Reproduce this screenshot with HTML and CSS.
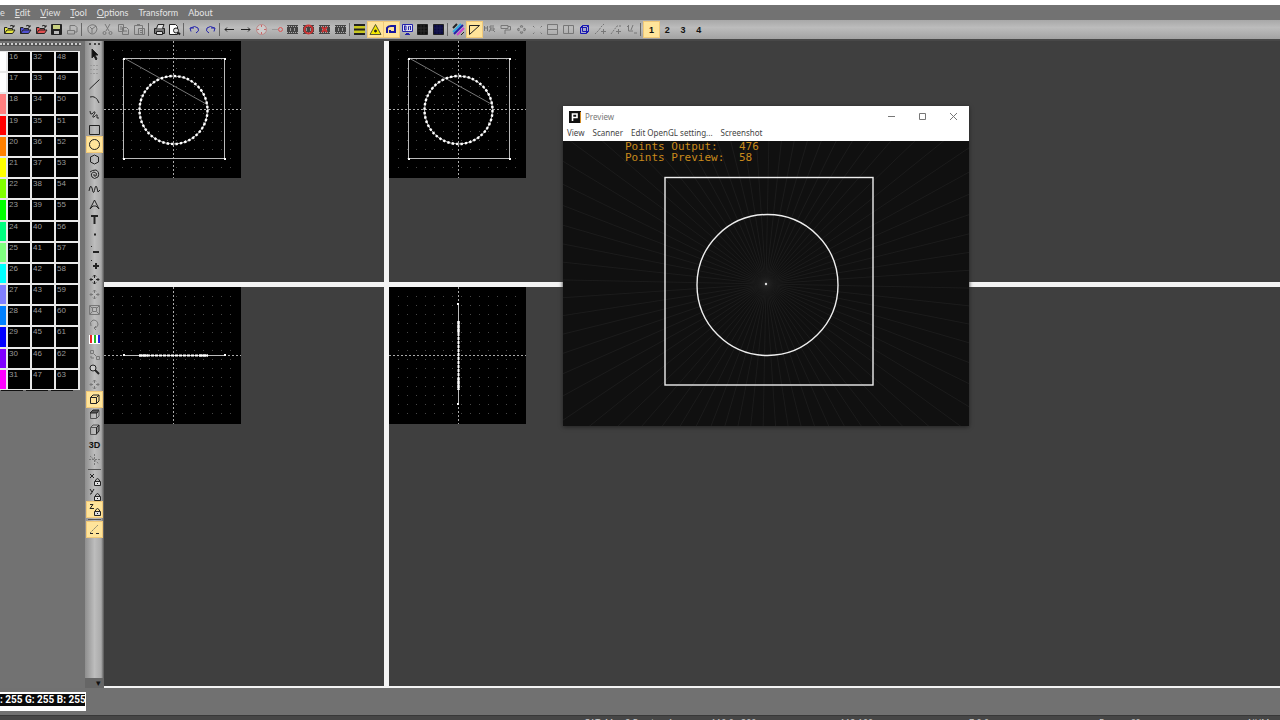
FILE: index.html
```
<!DOCTYPE html>
<html lang="en">
<head>
    <meta charset="UTF-8">
    <meta name="viewport" content="width=device-width, initial-scale=1.0">
    <title>Laser Editor</title>
    <link rel="stylesheet" href="styles.css">
</head>
<body>
    <header class="titlebar"></header>
    <nav class="menubar">
        <button>e</button>
        <button><u>E</u>dit</button>
        <button><u>V</u>iew</button>
        <button><u>T</u>ool</button>
        <button><u>O</u>ptions</button>
        <button>Transform</button>
        <button>About</button>
    </nav>
    <div class="toolbar">
        <div class="toolbar-items" id="toolbar"></div>
    </div>

    <main class="main">
        <aside class="dock">
            <div class="dock-grip"></div>
            <div class="palette" id="palette"></div>
            <div class="palette-end"><i></i><i></i><i></i></div>
        </aside>

        <div class="tools">
            <div class="tools-grip"></div>
            <div class="tools-items" id="tools"></div>
            <div class="tools-end">&#9662;</div>
        </div>

        <section class="views">
            <div class="view">
                <svg class="frame" viewBox="0 0 137 137">
                    <defs>
                        <pattern id="dots" x="5" y="5" width="9" height="9" patternUnits="userSpaceOnUse">
                            <rect x="4" y="4" width="1" height="1" fill="#484848"/>
                        </pattern>
                        <g id="grid">
                            <rect width="137" height="137" fill="#000"/>
                            <rect x="5" y="5" width="127" height="127" fill="url(#dots)"/>
                            <path class="axis" d="M0 68.5H137M69.5 0V137"/>
                        </g>
                        <g id="shape">
                            <path class="jump" d="M20 17L104 64"/>
                            <rect class="line" x="19.5" y="17.5" width="101" height="100"/>
                            <circle class="line" cx="69.5" cy="69" r="34"/>
                            <circle class="points" cx="69.5" cy="69" r="34"/>
                            <path class="corner" d="M19 17h2v2h-2zM120 17h2v2h-2zM19 117h2v2h-2zM120 117h2v2h-2z"/>
                        </g>
                    </defs>
                    <use href="#grid"/>
                    <use href="#shape"/>
                </svg>
            </div>
            <div class="view">
                <svg class="frame" viewBox="0 0 137 137">
                    <use href="#grid"/>
                    <use href="#shape"/>
                </svg>
            </div>
            <div class="view">
                <svg class="frame" viewBox="0 0 137 137">
                    <use href="#grid"/>
                    <path class="line" d="M20 68.5H121"/>
                    <path class="edge" d="M35 68.5H104"/>
                    <path class="edge-solid" d="M35 68.5H44M95 68.5H104"/>
                    <path class="corner" d="M19 67h2v2h-2zM120 67h2v2h-2z"/>
                </svg>
            </div>
            <div class="view">
                <svg class="frame" viewBox="0 0 137 137">
                    <use href="#grid"/>
                    <path class="line" d="M69.5 17V117"/>
                    <path class="edge" d="M69.5 34V103"/>
                    <path class="edge-solid" d="M69.5 34V46M69.5 91V103"/>
                    <path class="corner" d="M68 16h2v2h-2zM68 116h2v2h-2z"/>
                </svg>
            </div>
        </section>

        <section class="preview">
            <div class="preview-title">
                <svg class="logo" viewBox="0 0 12 12">
                    <rect width="12" height="12" fill="#111"/>
                    <path d="M11.5 1V12" stroke="#d08a20"/>
                    <path d="M3.5 10V3H8V6.5H4" fill="none" stroke="#fff" stroke-width="1.6"/>
                </svg>
                <h1>Preview</h1>
                <button aria-label="Minimize"><svg viewBox="0 0 9 9"><path d="M1 4.5H8"/></svg></button>
                <button aria-label="Maximize"><svg viewBox="0 0 9 9"><path d="M1.5 1.5H7.5V7.5H1.5Z"/></svg></button>
                <button aria-label="Close"><svg viewBox="0 0 9 9"><path d="M1 1L8 8M8 1L1 8"/></svg></button>
            </div>
            <nav class="preview-menu">
                <button>View</button>
                <button>Scanner</button>
                <button>Edit OpenGL setting...</button>
                <button>Screenshot</button>
            </nav>
            <div class="preview-body">
                <svg class="scene" viewBox="0 0 406 285">
                    <defs>
                        <radialGradient id="glow">
                            <stop offset="0" stop-color="#2a2a2a"/>
                            <stop offset="1" stop-color="#101010" stop-opacity="0"/>
                        </radialGradient>
                    </defs>
                    <rect width="406" height="285" fill="#101010"/>
                    <g id="rays" class="rays"></g>
                    <circle cx="203" cy="143" r="12" fill="url(#glow)"/>
                    <rect class="beam" x="102" y="36.5" width="208" height="207.5"/>
                    <circle class="beam" cx="204.5" cy="144" r="70.5"/>
                    <circle cx="203" cy="143" r="1.2" fill="#ddd"/>
                </svg>
                <dl class="stats">
                    <dt>Points Output:</dt><dd>476</dd>
                    <dt>Points Preview:</dt><dd>58</dd>
                </dl>
            </div>
        </section>
    </main>

    <div class="colorbar">
        <output class="rgb">: 255 G: 255 B: 255</output>
    </div>
    <footer class="statusbar">
        <span>CAT: Max 2 Preview 1</span>
        <span>110.0 : 200</span>
        <span>112:100</span>
        <span>Z:0.0</span>
        <span>Frame: 60</span>
        <span>NUM</span>
    </footer>
    <script src="script.js"></script>
</body>
</html>
```
FILE: styles.css
```
* { box-sizing: border-box; }
body {
    margin: 0;
    height: 100vh;
    display: flex;
    flex-direction: column;
    overflow: hidden;
    background: #717171;
    font-family: "Open Sans", "Noto Sans", sans-serif;
    font-size: 9px;
}
button {
    margin: 0;
    padding: 0;
    border: 0;
    background: none;
    color: inherit;
    font: inherit;
}
svg { display: block; }

/* top bars */
.titlebar { flex: 0 0 5px; background: #fff; }
.menubar {
    flex: 0 0 15px;
    display: flex;
    align-items: center;
    gap: 10px;
    background: #727272;
    color: #e4e4e4;
    font-family: Lato, sans-serif;
}
.toolbar {
    flex: 0 0 21px;
    background: linear-gradient(#a8a8a8, #bcbcbc 40%, #a2a2a2);
    border-bottom: 2px solid #484848;
}
.toolbar-items {
    display: flex;
    justify-content: space-between;
    align-items: center;
    max-width: 707px;
    height: 19px;
    padding-left: 2px;
}
.toolbar-items .sep { width: 3px; height: 13px; border-left: 1px solid #666; }
.tool {
    display: flex;
    align-items: center;
    justify-content: center;
    width: 15px;
    height: 15px;
    color: #111;
    font: bold 9px "Liberation Sans", sans-serif;
}
.tool svg { width: 15px; height: 15px; fill: none; stroke: #222; }
.tool.off svg { stroke: #777; }
.tool.on { background: #ffe49a; outline: 1px solid #f0c878; }

/* colour palette */
.main { position: relative; flex: 1; display: flex; min-height: 0; }
.dock { flex: 0 0 85px; background: #727272; }
.dock-grip { height: 3px; margin: 2px 4px 5px 0; border-top: 2px dotted #ccc; background: #555; }
.palette {
    display: grid;
    grid-template-columns: 6px repeat(3, 22px);
    grid-template-rows: repeat(16, 1fr);
    gap: 2px;
    width: 80px;
    height: 339px;
    padding: 1px 2px 1px 0;
    background: #e8e8e8;
}
.swatch {
    display: flex;
    align-items: flex-start;
    min-height: 0;
    padding-left: 1px;
    background: #000;
    color: #999;
    font: 8px "Liberation Sans", sans-serif;
}
.palette-end { display: flex; gap: 3px; width: 73px; padding-left: 1px; }
.palette-end i { flex: 1; height: 1px; background: #111; }

/* drawing tools */
.tools {
    flex: 0 0 19px;
    display: flex;
    flex-direction: column;
    align-items: center;
    background: linear-gradient(90deg, #8e8e8e, #bdbdbd 50%, #aaa 85%, #555);
}
.tools-grip { width: 11px; height: 4px; margin-top: 2px; border-top: 2px dotted #444; }
.tools-items { flex: 1; }
.tools-items .sep { height: 1px; margin: 2px 1px; background: #555; }
.tools-end { align-self: stretch; height: 10px; background: #666; color: #111; line-height: 9px; text-align: right; padding-right: 3px; }

/* four views */
.views {
    flex: 1;
    display: grid;
    grid-template-columns: 280px 1fr;
    grid-template-rows: 241px 1fr;
    gap: 5px;
    background: #f4f4f4;
    border-bottom: 2px solid #f4f4f4;
}
.view { background: #3f3f3f; overflow: hidden; }
.frame { width: 137px; height: 137px; }
.axis { stroke: #aaa; stroke-dasharray: 2 2; }
.line { fill: none; stroke: #bbb; }
.jump { stroke: #777; }
.points { fill: none; stroke: #fff; stroke-width: 2.4; stroke-dasharray: 2.4 2.05; }
.corner { fill: #fff; }
.edge { stroke: #fff; stroke-width: 2; stroke-dasharray: 3 1; }
.edge-solid { stroke: #fff; stroke-width: 2; }

/* preview window */
.preview {
    position: absolute;
    left: 563px;
    top: 65px;
    width: 406px;
    background: #fff;
    color: #444;
    font-family: "Noto Sans", sans-serif;
    box-shadow: 0 1px 4px #222;
}
.preview-title { display: flex; align-items: center; height: 21px; padding-left: 6px; }
.preview-title h1 { flex: 1; margin: 0 0 0 4px; font-size: 8px; font-weight: normal; color: #777; }
.preview-title button { width: 31px; display: flex; justify-content: center; }
.preview-title button svg { width: 9px; height: 9px; fill: none; stroke: #777; }
.logo { width: 12px; height: 12px; }
.preview-menu { display: flex; align-items: flex-start; gap: 8px; height: 14px; padding-left: 4px; font-size: 8px; }
.preview-body { position: relative; }
.scene { width: 100%; }
.beam { fill: none; stroke: #eee; stroke-width: 1.4; }
.rays { stroke: #1d1d1d; stroke-width: 0.9; }
.stats {
    position: absolute;
    left: 62px;
    top: 0;
    margin: 0;
    display: grid;
    grid-template-columns: 114px auto;
    color: #c98a1c;
    font: 11px "DejaVu Sans Mono", monospace;
    line-height: 11px;
}
.stats dd { margin: 0; }

/* bottom bars */
.colorbar { flex: 0 0 27px; padding-top: 4px; }
.rgb {
    display: block;
    width: 86px;
    height: 19px;
    border: solid #fff;
    border-width: 2px 1px 5px 0;
    background: #0a0a0a;
    color: #fff;
    font: bold 10px Roboto, sans-serif;
    line-height: 12px;
    white-space: nowrap;
    overflow: hidden;
}
.statusbar {
    flex: 0 0 5px;
    display: grid;
    grid-template-columns: 127px 129px 129px 130px 149px auto;
    padding: 2px 0 0 584px;
    background: #464646;
    border-top: 1px solid #383838;
    color: #ccc;
    line-height: 10px;
    white-space: nowrap;
    overflow: hidden;
}
```
FILE: script.js
```
// each entry: name, svg content (or text), state
const film = '<path fill="#444" stroke="none" d="M2 3h11v9H2z"/><path stroke="#aaa" stroke-dasharray="1 1" d="M2 4.5H13M2 10.5H13"/><path stroke="#999" d="M5.5 6V9M9.5 6V9"/>';
const folder = c => `<path fill="${c}" d="M2.5 11.5V5.5H5L6 6.5H10.5V8M2.5 11.5L5 8H13L10.5 11.5Z"/><path d="M8 4Q10 2 12 5M12 3V5H10"/>`;
const cross = '<path d="M7.5 3V6M7.5 9V12M3 7.5H6M9 7.5H12"/><path d="M6 4.5L7.5 3L9 4.5M6 10.5L7.5 12L9 10.5M4.5 6L3 7.5L4.5 9M10.5 6L12 7.5L10.5 9"/>';
const lock = '<path fill="#ddd" d="M7.5 9.5H13.5V13.5H7.5Z"/><path d="M8.5 9V8Q10.5 5 12.5 8V9M10.5 11V12"/>';
const cube = '<path d="M3.5 5.5H9.5V11.5H3.5ZM3.5 5.5L6 3H12V9L9.5 11.5M9.5 5.5L12 3"/>';

const toolbar = [
    ['Open', folder('#e8e840')],
    ['Open frame', folder('#5050d0')],
    ['Open show', folder('#e05050')],
    ['Save', '<path fill="#222" d="M2.5 2.5H12.5V12.5H2.5Z"/><path fill="#c8d080" stroke="none" d="M4 3h7v4H4z"/><path fill="#bbb" stroke="none" d="M5 9h5v3H5z"/>'],
    ['Export', '<path d="M2.5 12V8.5H9.5V12ZM5 8V3.5H10L12 5.5V10H10"/>', 'off'],
    null,
    ['Undo all', '<path d="M3 5Q7 1 11 4L12 7Q11 12 7 12Q2 11 3 5M5 5L7 7L11 4M7 7V11"/>', 'off'],
    ['Cut', '<path d="M5 2L9 9M10 2L6 9"/><circle cx="4.5" cy="11" r="1.5"/><circle cx="10.5" cy="11" r="1.5"/>', 'off'],
    ['Copy', '<path d="M2.5 2.5H7.5V9.5H2.5ZM6.5 5.5H10.5L12.5 7.5V12.5H6.5ZM4 5H6M4 7H6M8 9H11"/>', 'off'],
    ['Paste', '<path d="M2.5 3.5H10.5V12.5H2.5ZM5 2.5H8M6.5 6.5H12.5V12.5H6.5ZM8 8.5H11M8 10.5H11"/>', 'off'],
    null,
    ['Print', '<path fill="#777" d="M2.5 6.5H12.5V11.5H2.5Z"/><path fill="#ddd" d="M4.5 6.5L6 2.5H12L10.5 6.5M4.5 9.5H10.5V12.5H4.5Z"/>'],
    ['Print preview', '<path fill="#fff" d="M2.5 2.5H8.5L10.5 4.5V12.5H2.5Z"/><circle fill="#ddd" cx="9" cy="8.5" r="2.5"/><path stroke-width="2" d="M11 10.5L13 12.5"/>'],
    null,
    ['Undo', '<path stroke="#2222aa" d="M4 9.5L3 6L7 6M3.5 6Q8 3 11 6Q13 9 9 11"/>'],
    ['Redo', '<path stroke="#2222aa" d="M11 9.5L12 6L8 6M11.5 6Q7 3 4 6Q2 9 6 11"/>'],
    null,
    ['Previous', '<path d="M3 7.5H12M5 5.5L3 7.5L5 9.5"/>'],
    ['Next', '<path d="M3 7.5H12M10 5.5L12 7.5L10 9.5"/>'],
    ['Timer', '<circle cx="7.5" cy="7.5" r="5" stroke="#b88" fill="#ccc"/><path stroke="#c66" d="M7.5 3V5M3 7.5H5M7.5 10V12M10 7.5H12"/>'],
    ['Delete key', '<path stroke="#999" d="M2 7.5H8"/><circle cx="10.5" cy="7.5" r="2" stroke="#d55"/>'],
    ['Frames', film],
    ['Record', film + '<circle cx="7.5" cy="7.5" r="4" stroke="#c33" stroke-width="2"/>'],
    ['Delete frame', film + '<path stroke="#c33" stroke-width="2" d="M5 5L10 10M10 5L5 10"/>'],
    ['Insert frame', film],
    null,
    ['Layers', '<path fill="#c8c820" stroke="none" d="M2 3h11v9H2z"/><path stroke="#222" stroke-width="2" d="M2 3H13M2 7.5H13M2 12H13"/>'],
    ['Laser on', '<path fill="#f4e800" stroke="#553" d="M7.5 2.5L13 12.5H2Z"/><circle cx="7.5" cy="9" r="1" fill="#222"/>', 'on'],
    ['Output', '<path stroke="#1818a0" stroke-width="2" d="M3 11V6Q4 4 7 4H11V10H6V8"/>', 'on'],
    ['Display off', '<path fill="#dde" stroke="#2222aa" d="M2.5 2.5H12.5V9.5H2.5Z"/><path stroke="#2222aa" d="M4.5 4V8H6V4H4M8.5 8V4.5H9.5M11 4.5H11M8 6H9M10.5 8V4M6 11.5H9M5 12.5H10"/>'],
    ['Grid', '<path fill="#111" d="M2.5 2.5H12.5V12.5H2.5Z"/><path stroke="#2c2c2c" d="M6 3V12M9 3V12M3 6H12M3 9H12"/>'],
    ['Grid colour', '<path fill="#0c0c40" d="M2.5 2.5H12.5V12.5H2.5Z"/><path stroke="#1a1a50" d="M6 3V12M9 3V12M3 6H12M3 9H12"/>'],
    null,
    ['Colours', '<path stroke="#222" stroke-width="2" d="M2 6L6 2"/><path stroke="#3ad" stroke-width="2" d="M2 10L10 2"/><path stroke="#22a" stroke-width="2" d="M3 12L12 3"/><path stroke="#c4c" stroke-width="2" d="M6 13L13 6"/><path stroke="#222" d="M10 13L13 10"/>'],
    ['Blanking', '<path d="M2.5 12.5V3.5H12.5L2.5 12.5"/>', 'on'],
    ['Mirror', '<path d="M2.5 4V9M2 6H6M5.5 4V9M12 4H8V6H12V8H8M7 10L9 6M11 8L13 10"/>', 'off'],
    ['Paint', '<path d="M3 3.5H10V6.5H3ZM10 4.5H12.5V8H7V12"/>', 'off'],
    ['Move', '<path d="M7.5 3L9 5H6ZM7.5 12L9 10H6ZM3 7.5L5 6V9ZM12 7.5L10 6V9Z"/>', 'off'],
    ['Spread', '<path stroke-dasharray="2 1" d="M3 4L5 6M12 4L10 6M3 12L5 10M12 12L10 10"/>', 'off'],
    ['Split rows', '<path d="M2.5 2.5H12.5V12.5H2.5ZM3 7.5H12"/>', 'off'],
    ['Split columns', '<path d="M2.5 3.5H12.5V11.5H2.5ZM7.5 3V12"/>', 'off'],
    ['3D view', '<path stroke="#1818b0" fill="#aac" d="M3.5 5.5H9.5V11.5H3.5ZM5.5 3.5H11.5V9.5H5.5ZM3.5 5.5L5.5 3.5M9.5 5.5L11.5 3.5M9.5 11.5L11.5 9.5"/>'],
    ['Add point', '<path stroke-dasharray="2 1" d="M2 12L6 8L8 5L11 2"/><path d="M10.5 7V12M8 9.5H13"/>', 'off'],
    ['Move point', '<path stroke-dasharray="2 1" d="M2 12L5 8L8 4L12 4"/><path d="M9.5 7V12M7 9.5H12"/>', 'off'],
    ['Sort points', '<path d="M4.5 3V9H9M3 5L5 3M9 3L7 8M10 11H13"/>', 'off'],
    null,
    ['Page 1', '1', 'on'], ['Page 2', '2'], ['Page 3', '3'], ['Page 4', '4']
];

const tools = [
    ['Select', '<path fill="#111" d="M5 2V11L7 9L9 13L10 12L8 8H11Z"/>'],
    ['Grid snap', '<path stroke="#999" stroke-dasharray="2 1" d="M3 3.5H12M3 7.5H12M3 11.5H12"/>'],
    ['Line', '<path d="M2.5 12L12.5 2.5"/>'],
    ['Curve', '<path d="M3 5Q9 3 12 11"/>'],
    ['Freehand', '<path d="M3 4Q3 8 5 7Q8 3 8 6Q4 11 7 10Q11 6 10 9Q9 12 12 11"/>'],
    ['Rectangle', '<path d="M2.5 3.5H12.5V12.5H2.5Z"/>'],
    ['Circle', '<circle cx="7.5" cy="7.5" r="5"/>', 'on'],
    ['Polygon', '<path d="M7.5 3L11.5 5V10L7.5 12L3.5 10V5Z"/>'],
    ['Spiral', '<path d="M3 5Q5 3 9 3Q13 5 11 10Q7 13 5 10Q3 6 7 5Q11 6 9 9Q6 10 7 7"/>'],
    ['Wave', '<path d="M2 9L3 5Q4 3 5 6L6 10Q7 12 8 6Q9 2 10 6L11 10L13 8"/>'],
    ['Arc', '<path d="M3 12L7.5 3L12 12L9 9H6Z"/>'],
    ['Text', '<path stroke-width="2" d="M4 4H11M7.5 4V12"/>'],
    ['Point', '<path stroke-width="2" d="M7 7.5H9"/>'],
    ['Remove point', '<path d="M4 4.5H5"/><path stroke-width="2" d="M6 10H12"/>'],
    ['Add point', '<path d="M4 3.5H5"/><path stroke-width="2" d="M9 6V12M6 9H12"/>'],
    ['Move', cross],
    ['Move all', cross, 'off'],
    ['Scale', '<path d="M2.5 3.5H12.5V12.5H2.5ZM5.5 5.5H9.5V9.5H5.5ZM3 4L5 6M12 4L10 6M3 12L5 10M12 12L10 10"/>', 'off'],
    ['Rotate', '<path d="M4 9Q2 5 6 3Q11 3 11 8Q10 11 7 11M9 9L7 11L9 13"/>', 'off'],
    ['Colour bars', '<path fill="#fff" stroke="none" d="M2 3h11v9H2z"/><path stroke="#e22" stroke-width="2" d="M4 3V11"/><path stroke="#2b2" stroke-width="2" d="M8 3V11"/><path stroke="#22d" stroke-width="2" d="M12 3V11"/>'],
    ['Morph', '<path d="M3.5 3.5H6.5V6.5H3.5ZM9.5 9.5H12.5V12.5H9.5ZM7 7L9 9M4 9V11H7"/>', 'off'],
    ['Zoom', '<circle cx="6" cy="6" r="3" fill="#ccc"/><path stroke-width="2" d="M8 8L12 12"/>'],
    ['Pan', cross, 'off'],
    ['Front view', cube, 'on'],
    ['Top view', '<path stroke="#555" d="M3.5 6V11.5H9.5V6M12 4V9L10 11"/><path fill="#555" d="M3 6L6 3H12L10 6Z"/>'],
    ['Side view', '<path stroke="#555" d="M3.5 5.5H9.5V12.5H3.5ZM4 5L6 3H12"/><path fill="#888" d="M9.5 5.5L12 3V9L9.5 12Z"/>'],
    ['3D', '3D'],
    ['Centre', '<path stroke-dasharray="2 1" d="M7.5 2V13M2 7.5H13M3 4L12 12"/>', 'off'],
    null,
    ['Lock X', '<path d="M3 2L7 6M7 2L3 6"/>' + lock],
    ['Lock Y', '<path d="M3 2L5 5M7 2L4 7H3"/>' + lock],
    ['Lock Z', '<path d="M3 2.5H6L3 6.5H7"/>' + lock, 'on'],
    null,
    ['Point lock', '<path stroke="#776" stroke-dasharray="2 1" d="M3 11L6 8L11 3"/><path d="M3 11.5H6M9 11.5H12"/>', 'on']
];

function fill(id, items) {
    const html = items.map(item => {
        if (!item) return '<div class="sep"></div>';
        const [name, icon, state] = item;
        const content = icon.startsWith('<') ? `<svg viewBox="0 0 15 15">${icon}</svg>` : icon;
        return `<button class="tool ${state || ''}" aria-label="${name}">${content}</button>`;
    });
    document.getElementById(id).innerHTML = html.join('');
}

fill('toolbar', toolbar);
fill('tools', tools);

// palette: last colour of each row, then three black slots
const colors = ['#fff', '#fff', '#ff8080', '#f00', '#ff8000', '#ff0', '#80ff00', '#0f0',
    '#00ff80', '#80ff80', '#0ff', '#8080ff', '#0080ff', '#00f', '#8000ff', '#f0f'];
document.getElementById('palette').innerHTML = colors.map((color, i) => `
    <button class="swatch" style="background:${color}" aria-label="Colour ${i}"></button>
    <button class="swatch">${i + 16}</button>
    <button class="swatch">${i + 32}</button>
    <button class="swatch">${i + 48}</button>`).join('');

// faint beams from the scanner origin
let rays = '';
for (let i = 0; i < 72; i++) {
    const a = i * Math.PI / 36 + 0.02;
    rays += `<path d="M203 143L${(203 + 260 * Math.cos(a)).toFixed(1)} ${(143 + 260 * Math.sin(a)).toFixed(1)}"/>`;
}
document.getElementById('rays').innerHTML = rays;
```
